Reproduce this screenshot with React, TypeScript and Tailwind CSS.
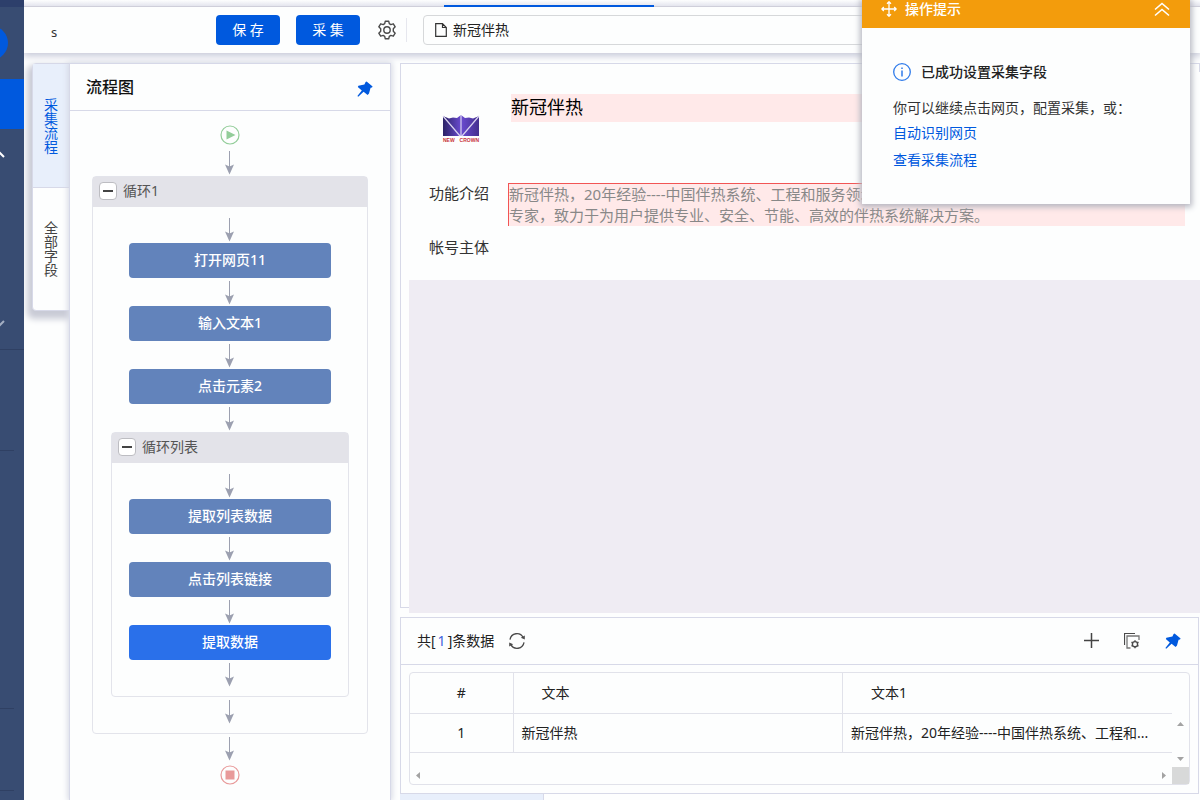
import type { ReactNode } from 'react';

function PinIcon() {
  return (
    <svg width="16" height="16" viewBox="0 0 16 16" fill="#0059de" aria-hidden="true">
      <path d="M9.6 0.6 15.6 5.4 15 6.6 13.6 6.8 12 12.6 10.6 14 6.6 10.8 1.2 15.8 0.4 15 4.8 9.4 0.8 6 1.4 4.8 7.4 3.6 8.6 1Z" />
    </svg>
  );
}

function GearIcon() {
  return (
    <svg width="20" height="20" viewBox="0 0 20 20" fill="none" stroke="#4a4a4a" strokeWidth="1.4" strokeLinejoin="round" aria-hidden="true">
      <path d="M8.3 1.2h3.4l.6 2.5 1.5.9 2.5-.8 1.9 3-1.9 1.9v2.6l1.9 1.9-1.9 3-2.5-.8-1.5.9-.6 2.5H8.3l-.6-2.5-1.5-.9-2.5.8-1.9-3 1.9-1.9V8.7L1.8 6.8l1.9-3 2.5.8 1.5-.9Z" />
      <circle cx="10" cy="10" r="3.2" />
    </svg>
  );
}

function RefreshIcon() {
  return (
    <svg width="18" height="18" viewBox="0 0 18 18" fill="none" stroke="#4a4a4a" strokeWidth="1.3" aria-hidden="true">
      <path d="M2 7.6A7 7 0 0 1 15.2 5.6M16 10.4A7 7 0 0 1 2.8 12.4" />
      <path d="M16.8 3.4v4L12.8 5.8ZM1.2 14.6v-4L5.2 12.2Z" fill="#4a4a4a" stroke="none" />
    </svg>
  );
}

function CopyGearIcon() {
  return (
    <svg width="16" height="16" viewBox="0 0 16 16" fill="none" stroke="#4a4a4a" aria-hidden="true">
      <path d="M.5 12V.5H11" strokeWidth="1.2" />
      <path d="M6.5 15H3V3h12v4" strokeWidth="1.3" stroke="#777" />
      <circle cx="11" cy="11.2" r="2.6" strokeWidth="1.4" />
      <path d="M11 7.2v1.4M11 13.8v1.4M7.5 9.2l1.2.7M13.3 12.5l1.2.7M7.5 13.2l1.2-.7M13.3 9.9l1.2-.7" strokeWidth="1.4" />
    </svg>
  );
}

function CrownLogo() {
  return (
    <svg width="38" height="30" viewBox="0 0 38 30" role="img" aria-label="NEW CROWN">
      <defs>
        <linearGradient id="crown" x1="0" x2="1">
          <stop offset="0" stopColor="#2b2366" />
          <stop offset="0.5" stopColor="#6a4bd0" />
          <stop offset="1" stopColor="#44308f" />
        </linearGradient>
      </defs>
      <path d="M1 2 7 4.5 11 3.5 15 4 19 1 23 4 27 3.5 31 4.5 37 2V22H1Z" fill="url(#crown)" />
      <path d="M1 2 18 22M37 2 20 22M19 1V22" stroke="#d9d3f0" strokeWidth="1.2" fill="none" />
      <g fontSize="5" fontWeight="bold" fontFamily="Liberation Sans, sans-serif" fill="#c8323c">
        <text x="1" y="28">NEW</text>
        <text x="37" y="28" textAnchor="end">CROWN</text>
      </g>
    </svg>
  );
}

function Arrow() {
  return (
    <svg className="mx-auto block" width="12" height="28" viewBox="0 0 12 28" aria-hidden="true">
      <path d="M5.5 3V20" stroke="#9ca0b0" />
      <path d="M1 16.5 5.5 18.5 10 16.5 5.5 26.5Z" fill="#9ca0b0" />
    </svg>
  );
}

function Node({ label, active = false }: { label: string; active?: boolean }) {
  return (
    <button
      type="button"
      className={`mx-auto block h-[35px] w-[202px] rounded pb-0.5 text-sm font-medium text-white ${active ? 'bg-[#2a70ea]' : 'bg-[#6283bb]'}`}
    >
      {label}
    </button>
  );
}

function Loop({ title, className = '', children }: { title: string; className?: string; children: ReactNode }) {
  return (
    <div className={`rounded border border-[#e3e4eb] pb-2 ${className}`}>
      <div className="mb-2 flex h-[30px] items-center gap-1.5 bg-[#e3e3e9] pb-0.5 pl-1.5 text-sm text-[#555]">
        <button type="button" aria-label={`收起${title}`} className="flex h-[18px] w-[18px] items-center justify-center rounded-sm border border-[#bdbdc2] bg-white">
          <span className="h-0.5 w-2.5 bg-[#444]" />
        </button>
        {title}
      </div>
      {children}
    </div>
  );
}

function Sidebar() {
  return (
    <nav className="relative z-30 flex w-6 shrink-0 flex-col overflow-hidden bg-[#384c72]">
      <div className="h-[7px] bg-[#2d3f6b]" />
      <div className="h-[72px] pt-[19px]">
        <div className="-ml-[26px] h-[34px] w-[34px] rounded-full bg-[#0059de]" />
      </div>
      <div className="h-[50px] bg-[#0059de]" />
      <div className="h-[221px] border-b border-[#2f4063] pt-[22px]">
        <svg className="-ml-[7px] block" width="12" height="7" viewBox="0 0 12 7" fill="none" stroke="#fff" strokeWidth="2" aria-hidden="true">
          <path d="M1 6 6 1 11 6" />
        </svg>
        <svg className="mt-[162px] -ml-[7px] block" width="12" height="7" viewBox="0 0 12 7" fill="none" stroke="#a3aec2" strokeWidth="2" aria-hidden="true">
          <path d="M1 1 6 6 11 1" />
        </svg>
      </div>
      <div className="mr-2.5 h-[101px] border-b border-[#2f4063]" />
      <div className="mr-2.5 h-[258px] border-b border-[#2f4063]" />
      <div className="mr-2.5 h-[82px] border-b border-[#2f4063]" />
    </nav>
  );
}

function Toolbar() {
  return (
    <header className="relative z-20 flex h-[46px] shrink-0 items-center bg-[#fdfefe] pr-2.5 pl-6 shadow-[0_2px_7px_1px_#c6c8d8]">
      <input
        aria-label="任务名称"
        defaultValue="s"
        className="mr-4 h-8 w-[152px] bg-transparent px-[3px] pt-1 text-[13px] text-[#333] outline-none"
      />
      <button type="button" className="h-[30px] w-16 rounded bg-[#0059de] text-sm text-white">保 存</button>
      <button type="button" className="ml-4 h-[30px] w-16 rounded bg-[#0059de] text-sm text-white">采 集</button>
      <button type="button" aria-label="设置" className="ml-[17px]"><GearIcon /></button>
      <div className="ml-[9px] h-6 w-px bg-[#e6e7ee]" />
      <div className="ml-4 flex h-[30px] flex-1 items-center rounded border border-[#d6d8da] pl-[11px] text-sm text-[#222]">
        <svg width="12" height="14" viewBox="0 0 12 14" fill="none" stroke="#333" strokeWidth="1.2" aria-hidden="true">
          <path d="M.7.7H7.5L11.3 4.5V13.3H.7ZM7.5.7V4.5H11.3" />
        </svg>
        <span className="ml-1.5">新冠伴热</span>
      </div>
      <button type="button" aria-label="更多" className="ml-4 h-2.5 w-2.5 rounded-full bg-[#9b9ea6]" />
    </header>
  );
}

function FlowPanel() {
  return (
    <>
      <div className="relative ml-2 h-[248px] w-[38px] shrink-0 rounded-l border border-[#d7d9e8] bg-[#fdfefe] text-sm leading-[14px] shadow-[-2px_5px_6px_3px_#c9cbd6]">
        <button type="button" className="flex h-[124px] w-full items-center justify-center border-b border-[#d7d9e8] bg-[#e8effb] text-[#0059de]">
          <span className="w-3.5">采集流程</span>
        </button>
        <button type="button" className="flex h-[122px] w-full items-center justify-center text-[#444]">
          <span className="w-3.5">全部字段</span>
        </button>
      </div>
      <section className="relative -ml-px w-[322px] shrink-0 border border-b-0 border-[#d7d9e8] bg-[#fdfefe] shadow-[0_0_6px_1px_#d3d6e2]">
        <div className="flex h-[47px] items-center justify-between border-b border-[#d7d9e8] pr-[17px] pl-4">
          <h2 className="text-base font-medium text-[#111]">流程图</h2>
          <button type="button" aria-label="固定流程图" className="mt-1"><PinIcon /></button>
        </div>
        <div className="px-[22px] pt-3.5">
          <svg className="mx-auto mb-[3px] block" width="20" height="20" viewBox="0 0 20 20" aria-hidden="true">
            <circle cx="10" cy="10" r="9" fill="none" stroke="#93cd9a" strokeWidth="1.2" />
            <path d="M6.5 5.5 15.5 10 6.5 14.5Z" fill="#93cd9a" />
          </svg>
          <Arrow />
          <Loop title="循环1">
            <Arrow />
            <Node label="打开网页11" />
            <Arrow />
            <Node label="输入文本1" />
            <Arrow />
            <Node label="点击元素2" />
            <Arrow />
            <Loop title="循环列表" className="mx-[18px]">
              <Arrow />
              <Node label="提取列表数据" />
              <Arrow />
              <Node label="点击列表链接" />
              <Arrow />
              <Node label="提取数据" active />
              <Arrow />
            </Loop>
            <Arrow />
          </Loop>
          <Arrow />
          <svg className="mx-auto mt-[3px] block" width="20" height="20" viewBox="0 0 20 20" aria-hidden="true">
            <circle cx="10" cy="10" r="9" fill="none" stroke="#e89a9a" strokeWidth="1.2" />
            <path d="M5.5 5.5h9v9h-9Z" fill="#e89a9a" />
          </svg>
        </div>
      </section>
    </>
  );
}

function PagePreview() {
  return (
    <section className="flex min-h-0 flex-1 border border-[#d7d9e8]">
      <div className="relative mt-2 -mr-0.5 -mb-1.5 ml-2 flex flex-1 flex-col bg-[#fdfefe] pt-[22px] text-[15px] text-[#333]">
        <div className="flex h-[89px] pl-[33px]">
          <div className="w-[69px] pt-5"><CrownLogo /></div>
          <h1 className="mr-4 h-7 flex-1 bg-[#ffe9e9] text-lg leading-[26px] text-black">新冠伴热</h1>
        </div>
        <div className="flex h-[54px] pl-5 leading-[21px]">
          <span className="w-[79px]">功能介绍</span>
          <p className="mr-4 h-[43px] flex-1 overflow-hidden border-t border-l border-[#f25555] bg-[#ffe9e9] text-[#888]">
            新冠伴热，20年经验----中国伴热系统、工程和服务领域的
            <br />
            专家，致力于为用户提供专业、安全、节能、高效的伴热系统解决方案。
          </p>
        </div>
        <div className="h-[43px] pl-5 leading-[21px]">帐号主体</div>
        <div className="flex-1 bg-[#efecf3]" />
      </div>
    </section>
  );
}

function DataPanel() {
  return (
    <section className="mt-[9px] mr-px shrink-0 border border-[#d7d9e8]">
      <div className="flex h-[47px] items-center border-b border-[#d7d9e8] pr-[17px] pl-4 text-sm text-[#222]">
        <span>共[<span className="px-0.5 text-[#3f63dd]">1</span>]条数据</span>
        <button type="button" aria-label="刷新" className="ml-3.5"><RefreshIcon /></button>
        <div className="ml-auto flex items-center gap-[25px]">
          <button type="button" aria-label="添加字段">
            <svg width="15" height="15" viewBox="0 0 15 15" stroke="#444" strokeWidth="1.5" aria-hidden="true">
              <path d="M7.5 0V15M0 7.5H15" />
            </svg>
          </button>
          <button type="button" aria-label="字段设置"><CopyGearIcon /></button>
          <button type="button" aria-label="固定数据"><PinIcon /></button>
        </div>
      </div>
      <div className="m-2 mt-[7px] rounded-sm border border-[#e1e2ea]">
        <div className="flex">
          <div className="min-w-0 flex-1">
            <table className="w-full table-fixed border-collapse text-sm text-[#222]">
              <colgroup>
                <col className="w-[103px]" />
                <col />
                <col />
              </colgroup>
              <thead>
                <tr className="h-[41px] border-b border-[#e1e2ea] text-left">
                  <th className="border-r border-[#e1e2ea] text-center font-normal">#</th>
                  <th className="border-r border-[#e1e2ea] pl-7 font-normal">文本</th>
                  <th className="pl-7 font-normal">文本1</th>
                </tr>
              </thead>
              <tbody>
                <tr className="h-[39px] border-b border-[#e1e2ea]">
                  <td className="border-r border-[#e1e2ea] text-center">1</td>
                  <td className="truncate border-r border-[#e1e2ea] px-2">新冠伴热</td>
                  <td className="truncate px-2">新冠伴热，20年经验----中国伴热系统、工程和...</td>
                </tr>
              </tbody>
            </table>
          </div>
          <div className="flex w-[17px] flex-col items-center justify-between pt-[49px]">
            <svg width="7" height="4" viewBox="0 0 7 4" fill="#a3a3a3" aria-hidden="true"><path d="M0 4 3.5 0 7 4Z" /></svg>
            <svg className="-mb-2" width="7" height="4" viewBox="0 0 7 4" fill="#a3a3a3" aria-hidden="true"><path d="M0 0 3.5 4 7 0Z" /></svg>
          </div>
        </div>
        <div className="mt-3.5 flex h-[17px] items-center pl-1.5">
          <svg width="4" height="7" viewBox="0 0 4 7" fill="#a3a3a3" aria-hidden="true"><path d="M4 0 0 3.5 4 7Z" /></svg>
          <svg className="mr-1.5 ml-auto" width="4" height="7" viewBox="0 0 4 7" fill="#a3a3a3" aria-hidden="true"><path d="M0 0 4 3.5 0 7Z" /></svg>
          <div className="h-full w-[17px] bg-[#d8d9d9]" />
        </div>
      </div>
    </section>
  );
}

function HintDialog() {
  return (
    <aside className="absolute top-0 right-2.5 z-40 w-[328px] bg-[#fdfefe] pb-[30px] text-sm shadow-[0_1px_6px_2px_#b5b6c0]">
      <div className="flex h-7 items-start bg-[#f39c0c] pr-5 pl-[19px] text-white">
        <svg className="mt-px" width="16" height="16" viewBox="0 0 16 16" fill="none" stroke="#fff" strokeWidth="1.3" aria-hidden="true">
          <path d="M8 1V15M1 8H15M6 2.8 8 .8 10 2.8M6 13.2 8 15.2 10 13.2M2.8 6 .8 8 2.8 10M13.2 6 15.2 8 13.2 10" />
        </svg>
        <span className="ml-2 leading-[18px] font-medium">操作提示</span>
        <button type="button" aria-label="收起" className="mt-0.5 ml-auto">
          <svg width="16" height="15" viewBox="0 0 16 15" fill="none" stroke="#fff" strokeWidth="1.6" aria-hidden="true">
            <path d="M1 7.5 8 1.5 15 7.5M1 13.5 8 7.5 15 13.5" />
          </svg>
        </button>
      </div>
      <div className="px-[31px] pt-8">
        <div className="flex items-center gap-2.5 font-medium text-[#222]">
          <svg width="18" height="18" viewBox="0 0 18 18" fill="none" stroke="#2f7bea" aria-hidden="true">
            <circle cx="9" cy="9" r="8.3" strokeWidth="1.3" />
            <path d="M9 7.5V13.5M9 4.5V6" strokeWidth="1.5" />
          </svg>
          <h2 className="leading-6">已成功设置采集字段</h2>
        </div>
        <p className="mt-3 leading-6 text-[#333]">你可以继续点击网页，配置采集，或：</p>
        <a href="#auto" className="block leading-[26px] text-[#0059de]">自动识别网页</a>
        <a href="#flow" className="block leading-7 text-[#0059de]">查看采集流程</a>
      </div>
    </aside>
  );
}

export default function App() {
  return (
    <div className="relative flex h-screen overflow-hidden bg-[#fdfefe] font-['Noto_Sans','Noto_Sans_CJK_SC',sans-serif]">
      <Sidebar />
      <div className="flex min-w-0 flex-1 flex-col">
        <div className="relative z-30 flex h-[7px] shrink-0 items-end border-b border-[#cfcfda] bg-linear-to-b from-[#fdfefe] to-[#e4e5ee]">
          <div className="-mb-px ml-[420px] h-0.5 w-[210px] bg-[#0059de]" />
        </div>
        <Toolbar />
        <main className="flex min-h-0 flex-1 pt-2.5">
          <FlowPanel />
          <div className="ml-[9px] flex min-w-0 flex-1 flex-col">
            <PagePreview />
            <DataPanel />
            <div className="h-1.5 w-36 shrink-0 border-r border-[#d7d9e8] bg-[#e8effb]" />
          </div>
        </main>
      </div>
      <HintDialog />
    </div>
  );
}
